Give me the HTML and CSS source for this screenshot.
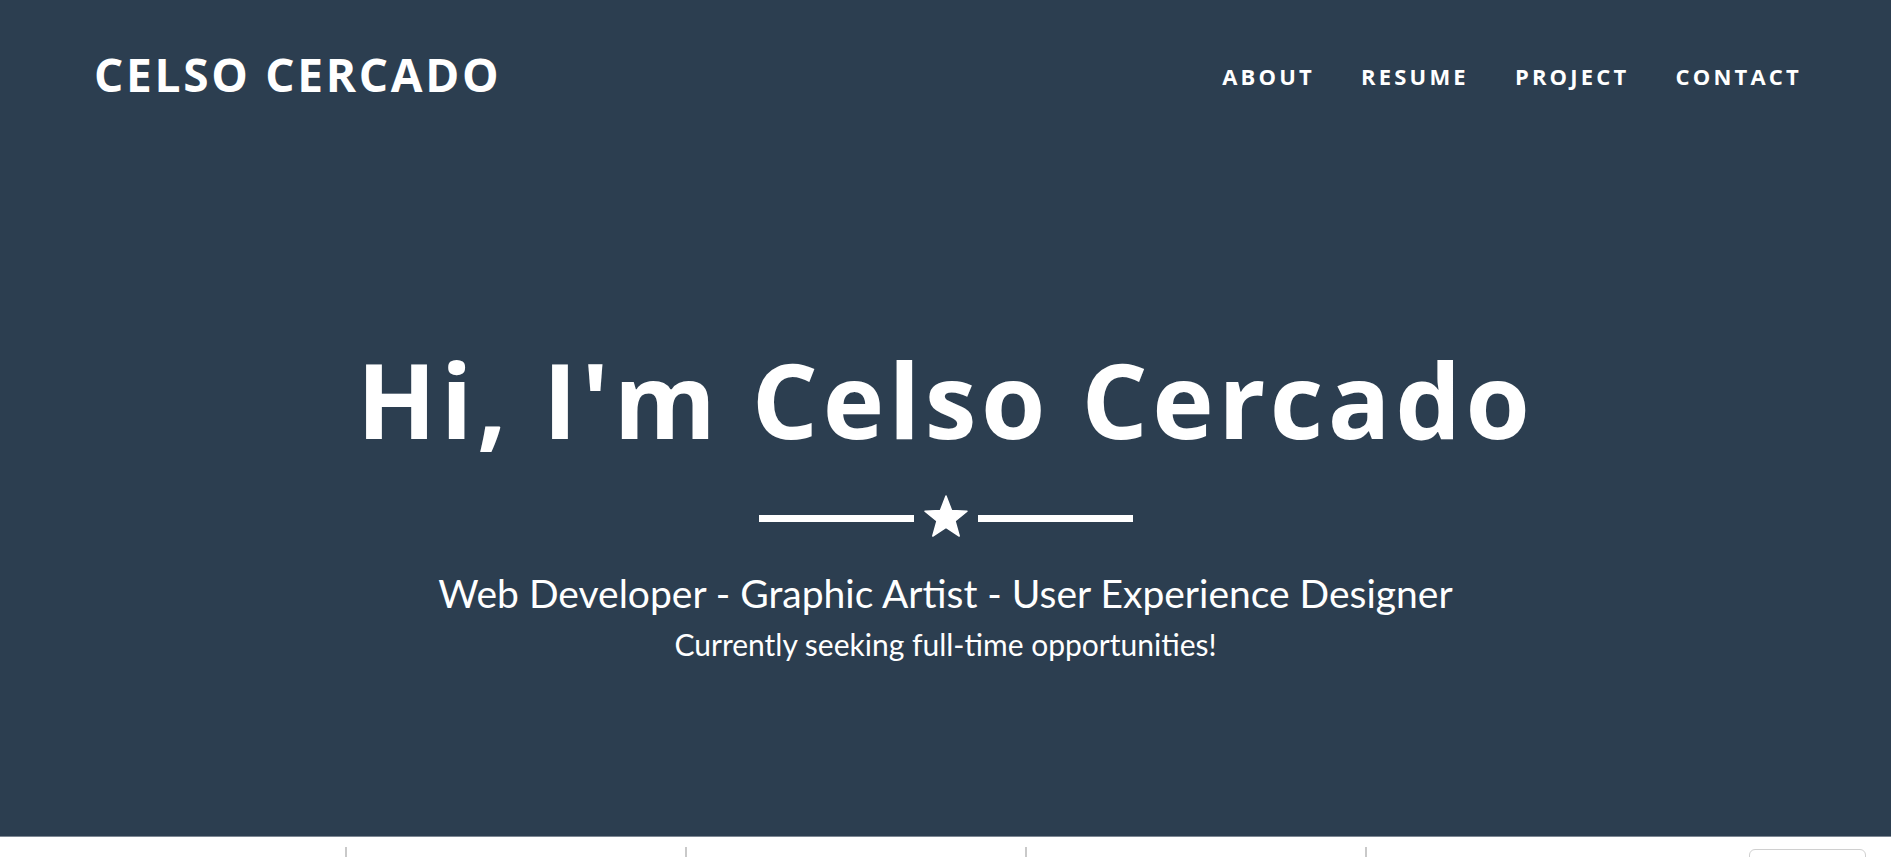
FILE: index.html
```html
<!DOCTYPE html>
<html lang="en">
<head>
<meta charset="utf-8">
<title>Celso Cercado</title>
<link rel="stylesheet" href="styles.css">
</head>
<body>
<header class="hero">
  <nav class="topnav">
    <a class="brand" href="#">CELSO CERCADO</a>
    <ul class="menu">
      <li><a href="#about">ABOUT</a></li>
      <li><a href="#resume">RESUME</a></li>
      <li><a href="#project">PROJECT</a></li>
      <li><a href="#contact">CONTACT</a></li>
    </ul>
  </nav>
  <div class="intro">
    <h1 class="title">Hi, I'm Celso Cercado</h1>
    <div class="divider">
      <span class="rule"></span>
      <svg class="star" viewBox="0 0 44 42" width="44" height="42" aria-hidden="true"><polygon points="22,1 27.6,15.6 43,16.2 31,26 35.2,41 22,32.4 8.8,41 13,26 1,16.2 16.4,15.6" fill="#fff" stroke="#fff" stroke-width="1.5" stroke-linejoin="round"/></svg>
      <span class="rule"></span>
    </div>
    <p class="skills">Web Developer - Graphic Artist - User Experience Designer</p>
    <p class="seeking">Currently seeking full-time opportunities!</p>
  </div>
</header>
<section class="strip">
  <div class="cell"></div>
  <div class="cell sep"></div>
  <div class="cell sep"></div>
  <div class="cell sep"></div>
  <div class="cell sep"></div>
  <div class="box"></div>
</section>
</body>
</html>
```

FILE: styles.css
```css
html, body {
  margin: 0;
  padding: 0;
  background: #ffffff;
  overflow: hidden;
}
body {
  font-family: "Open Sans", "Liberation Sans", sans-serif;
}
.hero {
  background: #2c3e50;
  color: #ffffff;
  height: 836px;
  border-bottom: 1px solid #7d8793;
  display: flex;
  flex-direction: column;
}
.topnav {
  display: flex;
  justify-content: space-between;
  align-items: flex-start;
  padding: 51px 89px 0 94px;
}
.brand {
  color: #fff;
  text-decoration: none;
  font-weight: 700;
  font-size: 46px;
  line-height: 46px;
  letter-spacing: 2.7px;
}
.menu {
  list-style: none;
  margin: 14px 0 0;
  padding: 0;
  display: flex;
  gap: 46px;
}
.menu a {
  color: #fff;
  text-decoration: none;
  font-weight: 700;
  font-size: 22px;
  line-height: 22px;
  letter-spacing: 3.2px;
}
.intro {
  display: flex;
  flex-direction: column;
  align-items: center;
  padding-top: 250px;
}
.title {
  margin: 0;
  font-weight: 700;
  font-size: 104px;
  line-height: 104px;
  letter-spacing: 4.5px;
}
.divider {
  display: flex;
  align-items: center;
  gap: 10px;
  margin-top: 44px;
}
.rule {
  display: block;
  width: 155px;
  height: 7px;
  margin-top: 5px;
  background: #fff;
}
.star {
  display: block;
}
.skills {
  margin: 32px 0 0;
  font-family: "Lato", sans-serif;
  font-size: 39px;
  line-height: 48px;
}
.seeking {
  margin: 8px 0 0;
  font-family: "Lato", sans-serif;
  font-size: 30px;
  line-height: 38px;
}
.strip {
  display: flex;
  padding: 10px 0 0 5px;
  height: 20px;
  position: relative;
}
.cell {
  width: 340px;
  height: 20px;
}
.cell.sep {
  border-left: 2px solid #c9c9c9;
  width: 338px;
}
.box {
  position: absolute;
  left: 1749px;
  top: 12px;
  width: 115px;
  height: 30px;
  border: 1px solid #d0d0d0;
  border-radius: 6px;
}
```
